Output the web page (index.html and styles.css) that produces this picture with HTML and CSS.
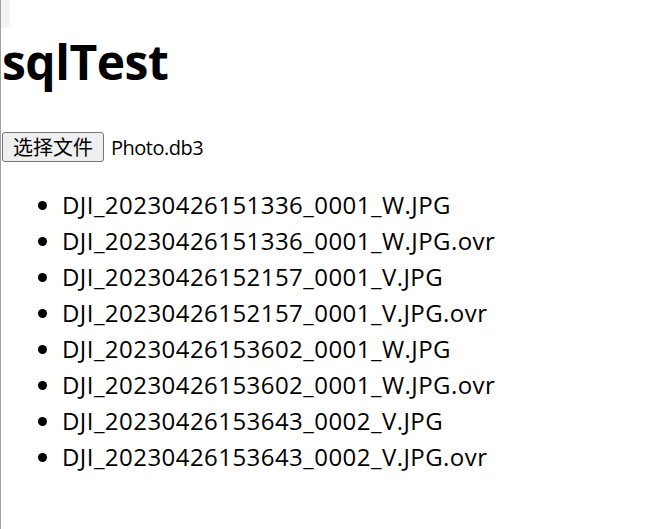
FILE: index.html
```html
<!DOCTYPE html>
<html lang="zh">
<head>
<meta charset="utf-8">
<title>sqlTest</title>
<link rel="stylesheet" href="styles.css">
</head>
<body>
<div class="edge"></div>
<div class="page">
  <h1 class="title">sqlTest</h1>
  <div class="picker">
    <button class="file-btn" type="button">选择文件</button>
    <span class="file-name">Photo.db3</span>
  </div>
  <ul class="files">
    <li>DJI_20230426151336_0001_W.JPG</li>
    <li>DJI_20230426151336_0001_W.JPG.ovr</li>
    <li>DJI_20230426152157_0001_V.JPG</li>
    <li>DJI_20230426152157_0001_V.JPG.ovr</li>
    <li>DJI_20230426153602_0001_W.JPG</li>
    <li>DJI_20230426153602_0001_W.JPG.ovr</li>
    <li>DJI_20230426153643_0002_V.JPG</li>
    <li>DJI_20230426153643_0002_V.JPG.ovr</li>
  </ul>
</div>
</body>
</html>
```
FILE: styles.css
```css
html, body {
  margin: 0;
  padding: 0;
  background: #fff;
  height: 100%;
}
body {
  font-family: "Open Sans", "Noto Sans CJK SC", sans-serif;
  color: #000;
  border-left: 1px solid #a0a0a0;
  box-sizing: border-box;
  position: relative;
}
.edge {
  position: absolute;
  left: 0;
  top: 0;
  width: 9px;
  height: 28px;
  background: #f3f3f3;
  border-bottom-right-radius: 5px;
}
.page {
  padding-left: 1px;
}
.title {
  font-size: 48px;
  font-weight: 700;
  margin: 0;
  padding-top: 30px;
  line-height: 64px;
  letter-spacing: -0.5px;
}
.picker {
  display: flex;
  align-items: center;
  margin-top: 38px;
  gap: 7px;
}
.file-btn {
  font-family: "Noto Sans CJK SC", sans-serif;
  font-size: 20px;
  height: 30px;
  padding: 0 10px;
  background: #efefef;
  border: 1px solid #767676;
  border-radius: 3px;
  color: #000;
  line-height: 1;
}
.file-name {
  font-size: 20px;
  letter-spacing: -0.5px;
}
.files {
  margin: 25px 0 0;
  padding-left: 60px;
  font-size: 24px;
  line-height: 36px;
  letter-spacing: 0.45px;
}
```
